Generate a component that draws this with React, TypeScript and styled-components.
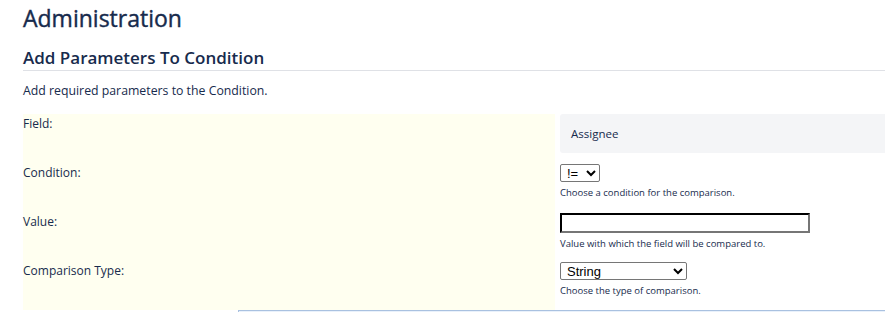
import React, { ReactElement } from "react";
import styled, { createGlobalStyle } from "styled-components";

const GlobalStyle = createGlobalStyle`
  body {
    margin: 0;
    background: #fff;
    font-family: "Open Sans", "Noto Sans", sans-serif;
    color: #172b4d;
    overflow: hidden;
  }
`;

interface ParamRow {
  label: string;
  help?: string;
  kind: "static" | "select" | "input";
  value?: string;
  options?: string[];
  selectWidth?: number;
}

const rows: ParamRow[] = [
  { label: "Field:", kind: "static", value: "Assignee" },
  {
    label: "Condition:",
    kind: "select",
    options: ["!=", "="],
    selectWidth: 40,
    help: "Choose a condition for the comparison.",
  },
  {
    label: "Value:",
    kind: "input",
    help: "Value with which the field will be compared to.",
  },
  {
    label: "Comparison Type:",
    kind: "select",
    options: ["String", "Number", "Date"],
    selectWidth: 127,
    help: "Choose the type of comparison.",
  },
];

function App(): ReactElement {
  return (
    <>
      <GlobalStyle />
      <Page>
        <Title>Administration</Title>
        <SectionTitle>Add Parameters To Condition</SectionTitle>
        <Description>Add required parameters to the Condition.</Description>
        <ParamTable>
          {rows.map((row) => (
            <React.Fragment key={row.label}>
              <LabelCell>{row.label}</LabelCell>
              <ValueCell>
                {row.kind === "static" && <StaticValue>{row.value}</StaticValue>}
                {row.kind === "select" && (
                  <Select style={{ width: row.selectWidth }} defaultValue={row.options?.[0]}>
                    {row.options?.map((o) => (
                      <option key={o}>{o}</option>
                    ))}
                  </Select>
                )}
                {row.kind === "input" && <TextInput type="text" />}
                {row.help && <HelpText>{row.help}</HelpText>}
              </ValueCell>
            </React.Fragment>
          ))}
        </ParamTable>
        <Footer />
      </Page>
    </>
  );
}

const Page = styled.div`
  padding-left: 23px;
`;

const Title = styled.h1`
  margin: 0;
  padding-top: 2px;
  font-size: 23px;
  line-height: 32px;
  font-weight: 500;
  color: #172b4d;
  -webkit-text-stroke: 0.4px #172b4d;
`;

const SectionTitle = styled.h2`
  margin: 12px 0 0;
  font-size: 17px;
  line-height: 24px;
  font-weight: 600;
  color: #172b4d;
  border-bottom: 1px solid #dfe1e6;
  padding-bottom: 0;
`;

const Description = styled.p`
  margin: 11px 0 0;
  font-size: 12.3px;
  line-height: 17px;
`;

const ParamTable = styled.div`
  margin-top: 15px;
  display: grid;
  grid-template-columns: 532px 1fr;
  column-gap: 5px;
  grid-auto-rows: 49px;
`;

const LabelCell = styled.div`
  background: #fffff0;
  font-size: 12px;
  line-height: 16px;
  padding-top: 2px;
`;

const ValueCell = styled.div`
  display: flex;
  flex-direction: column;
  align-items: flex-start;
  padding-top: 1px;
`;

const StaticValue = styled.div`
  align-self: stretch;
  margin-top: -1px;
  height: 39px;
  box-sizing: border-box;
  background: #f4f5f7;
  border-radius: 3px 0 0 3px;
  padding: 12px 11px;
  font-size: 11.5px;
  line-height: 16px;
`;

const Select = styled.select`
  height: 18px;
  box-sizing: border-box;
  font-family: "Liberation Sans", Arial, sans-serif;
  font-size: 13px;
  color: #000;
  border: 1px solid #767676;
  border-radius: 2px;
  background: #fff;
  padding: 0 0 0 2px;
`;

const TextInput = styled.input`
  width: 250px;
  height: 20px;
  box-sizing: border-box;
  border: 2px inset #767676;
  border-top-color: #222;
  border-left-color: #222;
  background: #fff;
  padding: 0 2px;
  margin: 0;
`;

const HelpText = styled.div`
  margin-top: 5px;
  font-size: 9.5px;
  line-height: 12px;
  color: #172b4d;
`;

const Footer = styled.div`
  margin-left: 215px;
  height: 3px;
  border-top: 1px solid #a9c1e0;
  border-left: 1px solid #a9c1e0;
  background: #e9f1fb;
`;

export default App;
